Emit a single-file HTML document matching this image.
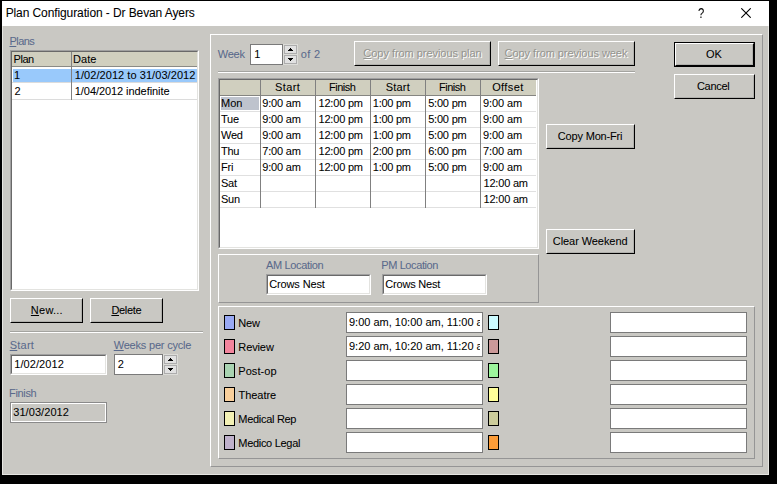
<!DOCTYPE html>
<html><head><meta charset="utf-8"><title>Plan Configuration</title><style>
*{margin:0;padding:0;box-sizing:border-box}
html,body{width:777px;height:484px;overflow:hidden;background:#000}
body{position:relative;font-family:"Liberation Sans",sans-serif;font-size:11px;color:#000;line-height:13px;-webkit-text-stroke:0.06px currentColor}
.a{position:absolute;white-space:nowrap}
.win{left:2px;top:1px;width:767px;height:474px;background:#c9c8c3}
.title{left:2px;top:1px;width:767px;height:25px;background:#fff}
.lbl{color:#5a6a8c}
.t{height:13px;line-height:13px}
u{text-decoration:underline;text-underline-offset:1px}
.btn{background:#c9c8c3;border:1px solid;border-color:#fff #000 #000 #fff;text-align:center}
.btn i{position:absolute;left:0;top:0;right:0;bottom:0;border:1px solid;border-color:#c9c8c3 #b0b0ac #b0b0ac #c9c8c3;}
.btn span{position:absolute;left:0;right:0;text-align:center;height:13px;line-height:13px}
.btn span b{font-weight:normal;position:relative}
.dis span{color:#94948f;text-shadow:1px 1px 0 #fff;-webkit-text-stroke:0}
.sunk{border:1px solid;border-color:#a0a0a0 #fff #fff #a0a0a0;background:#fff}
.sunk>i{position:absolute;left:0;top:0;right:0;bottom:0;border:1px solid;border-color:#696969 #e3e3e0 #e3e3e0 #696969;pointer-events:none}
.inp{border:1px solid #7a7a7a;background:#fff}
.raised{border:1px solid;border-color:#fff #959595 #959595 #fff}
.sep{height:2px;border-top:1px solid #a4a4a0;border-bottom:1px solid #fff}
.hdr{background:#d0cfbf}
.spbg{background:#dcdcd8}
.spin{background:#e1e1e1;border:1px solid #adadad;width:13px;height:9px}
.sw{border:1px solid #000;width:11px;height:15px}
</style></head><body>
<div class="a win"></div>
<div class="a title"></div>
<div class="a" style="left:2px;top:26px;width:1px;height:449px;background:#e6e6e2"></div>
<div class="a" style="left:768px;top:26px;width:1px;height:449px;background:#e6e6e2"></div>
<div class="a" style="left:2px;top:474px;width:767px;height:1px;background:#e6e6e2"></div>
<div class="a" id="ttl" style="left:5.63px;top:6px;font-size:12px;height:14px;line-height:14px;letter-spacing:-0.098px;">Plan Configuration - Dr Bevan Ayers</div>
<div class="a" id="q" style="left:697px;top:5px;width:8px;text-align:center;font-size:15px;height:16px;line-height:16px;transform:scaleX(0.75)">?</div>
<svg class="a" style="left:741px;top:8px" width="10" height="10"><path d="M0.3 0.3L9.7 9.7M9.7 0.3L0.3 9.7" stroke="#000" stroke-width="1.1" fill="none"/></svg>
<div class="a t lbl" id="plans" style="left:9.5px;top:35px;letter-spacing:-0.550px;"><u>P</u>lans</div>
<div class="a sunk" style="left:10px;top:50px;width:189px;height:241px"><i></i></div>
<div class="a hdr" style="left:12px;top:52px;width:185px;height:14px"></div>
<div class="a" style="left:12px;top:66px;width:185px;height:1px;background:#8a8a86"></div>
<div class="a" style="left:13px;top:69px;width:184px;height:13px;background:#99c9fb"></div>
<div class="a" style="left:12px;top:82px;width:185px;height:1px;background:#dcdcdc"></div>
<div class="a" style="left:12px;top:99px;width:185px;height:1px;background:#dcdcdc"></div>
<div class="a" style="left:71px;top:52px;width:1px;height:48px;background:#808080"></div>
<div class="a t " id="h_plan" style="left:13.5px;top:53px;letter-spacing:-0.450px;">Plan</div>
<div class="a t " id="h_date" style="left:73.1px;top:53px;">Date</div>
<div class="a t " id="r1a" style="left:14.1px;top:69px;">1</div>
<div class="a t " id="r1b" style="left:74.81px;top:69px;letter-spacing:0.058px;">1/02/2012 to 31/03/2012</div>
<div class="a t " style="left:14.4px;top:85px;">2</div>
<div class="a t " id="r2b" style="left:74.81px;top:85px;letter-spacing:-0.067px;">1/04/2012 indefinite</div>
<div class="a btn " style="left:10px;top:298px;width:73px;height:25px"><i></i><span style="top:5px;"><b id="b_new" style="left:0.36px;letter-spacing:0.234px;"><u>N</u>ew...</b></span></div>
<div class="a btn " style="left:90px;top:298px;width:73px;height:25px"><i></i><span style="top:5px;"><b id="b_del" style="left:-0.18px;letter-spacing:-0.324px;"><u>D</u>elete</b></span></div>
<div class="a sep" style="left:10px;top:331px;width:193px"></div>
<div class="a t lbl" id="start" style="left:9.73px;top:339px;letter-spacing:0.225px;"><u>S</u>tart</div>
<div class="a t lbl" id="wpc" style="left:113.73px;top:339px;letter-spacing:-0.200px;"><u>W</u>eeks per cycle</div>
<div class="a sunk" style="left:10px;top:354px;width:97px;height:21px"><i></i></div>
<div class="a t " id="v_start" style="left:14.19px;top:358px;letter-spacing:0.079px;">1/02/2012</div>
<div class="a inp" style="left:114px;top:354px;width:49px;height:21px"></div>
<div class="a t " id="v_wpc" style="left:117.82px;top:358px;">2</div>
<div class="a spbg" style="left:163px;top:354px;width:15px;height:21px"></div>
<div class="a spin" style="left:164px;top:355px"></div>
<div class="a spin" style="left:164px;top:365px"></div>
<svg class="a" style="left:168px;top:358px" width="5" height="3"><path d="M2 0h1v1h1v1h1v1h-5v-1h1v-1h1z" fill="#000"/></svg>
<svg class="a" style="left:168px;top:368px" width="5" height="3"><path d="M0 0h5v1h-1v1h-1v1h-1v-1h-1v-1h-1z" fill="#000"/></svg>
<div class="a t lbl" id="finish" style="left:9.1px;top:387px;letter-spacing:-0.360px;">Finish</div>
<div class="a" style="left:10px;top:402px;width:97px;height:21px;border:1px solid #8a8a8a"><div class="a" style="left:0;top:0;right:0;bottom:0;border:1px solid #fff"></div></div>
<div class="a t " id="v_fin" style="left:13.28px;top:406px;letter-spacing:0.060px;">31/03/2012</div>
<div class="a raised" style="left:210px;top:34px;width:553px;height:433px"></div>
<div class="a t lbl" id="week" style="left:217.73px;top:48px;letter-spacing:-0.210px;">Week</div>
<div class="a inp" style="left:250px;top:44px;width:33px;height:21px"></div>
<div class="a t " id="v_week" style="left:254.18px;top:48px;">1</div>
<div class="a spbg" style="left:283px;top:44px;width:15px;height:21px"></div>
<div class="a spin" style="left:284px;top:45px"></div>
<div class="a spin" style="left:284px;top:55px"></div>
<svg class="a" style="left:288px;top:48px" width="5" height="3"><path d="M2 0h1v1h1v1h1v1h-5v-1h1v-1h1z" fill="#000"/></svg>
<svg class="a" style="left:288px;top:58px" width="5" height="3"><path d="M0 0h5v1h-1v1h-1v1h-1v-1h-1v-1h-1z" fill="#000"/></svg>
<div class="a t lbl" id="of2" style="left:300.73px;top:48px;letter-spacing:0.390px;">of 2</div>
<div class="a btn dis" style="left:354px;top:41px;width:137px;height:25px"><i></i><span style="top:5px;"><b id="b_cpp" style="left:0px;letter-spacing:-0.041px;"><u>C</u>opy from previous plan</b></span></div>
<div class="a btn dis" style="left:498px;top:41px;width:137px;height:25px"><i></i><span style="top:5px;"><b id="b_cpw" style="left:-0.54px;letter-spacing:-0.058px;"><u>C</u>opy from previous week</b></span></div>
<div class="a sep" style="left:218px;top:71px;width:417px"></div>
<div class="a sunk" style="left:218px;top:78px;width:321px;height:171px"><i></i></div>
<div class="a hdr" style="left:220px;top:80px;width:316px;height:15px"></div>
<div class="a" style="left:220px;top:95px;width:316px;height:1px;background:#858581"></div>
<div class="a" style="left:220px;top:111px;width:316px;height:1px;background:#e0e0e0"></div>
<div class="a" style="left:220px;top:127px;width:316px;height:1px;background:#e0e0e0"></div>
<div class="a" style="left:220px;top:143px;width:316px;height:1px;background:#e0e0e0"></div>
<div class="a" style="left:220px;top:159px;width:316px;height:1px;background:#e0e0e0"></div>
<div class="a" style="left:220px;top:175px;width:316px;height:1px;background:#e0e0e0"></div>
<div class="a" style="left:220px;top:191px;width:316px;height:1px;background:#e0e0e0"></div>
<div class="a" style="left:220px;top:207px;width:316px;height:1px;background:#e0e0e0"></div>
<div class="a" style="left:260px;top:80px;width:1px;height:128px;background:#808080"></div>
<div class="a" style="left:315px;top:80px;width:1px;height:128px;background:#808080"></div>
<div class="a" style="left:370px;top:80px;width:1px;height:128px;background:#808080"></div>
<div class="a" style="left:425px;top:80px;width:1px;height:128px;background:#808080"></div>
<div class="a" style="left:480px;top:80px;width:1px;height:128px;background:#808080"></div>
<div class="a" style="left:221px;top:97px;width:38px;height:13px;background:#bec3cd"></div>
<div class="a t" style="left:261px;top:81px;width:54px;text-align:center"><b id="th0" style="font-weight:normal;position:relative;left:-0.45px;letter-spacing:0.400px;">Start</b></div>
<div class="a t" style="left:316px;top:81px;width:54px;text-align:center"><b id="th1" style="font-weight:normal;position:relative;left:-0.81px;letter-spacing:-0.468px;">Finish</b></div>
<div class="a t" style="left:371px;top:81px;width:54px;text-align:center"><b id="th2" style="font-weight:normal;position:relative;left:-0.18px;letter-spacing:0.201px;">Start</b></div>
<div class="a t" style="left:426px;top:81px;width:54px;text-align:center"><b id="th3" style="font-weight:normal;position:relative;left:-0.81px;letter-spacing:-0.468px;">Finish</b></div>
<div class="a t" style="left:481px;top:81px;width:54px;text-align:center"><b id="th4" style="font-weight:normal;position:relative;left:-0.09px;letter-spacing:0.400px;">Offset</b></div>
<div class="a t " id="mon" style="left:221px;top:97px;">Mon</div>
<div class="a t " id="c0" style="left:262.19px;top:97px;letter-spacing:-0.165px;">9:00 am</div>
<div class="a t " id="c1" style="left:318.54px;top:97px;letter-spacing:-0.200px;">12:00 pm</div>
<div class="a t " id="c2" style="left:372.82px;top:97px;letter-spacing:-0.255px;">1:00 pm</div>
<div class="a t " id="c3" style="left:428.18px;top:97px;letter-spacing:-0.200px;">5:00 pm</div>
<div class="a t " id="c4" style="left:482.9px;top:97px;letter-spacing:-0.075px;">9:00 am</div>
<div class="a t " style="left:221px;top:113px;letter-spacing:-0.25px;">Tue</div>
<div class="a t " style="left:262.19px;top:113px;letter-spacing:-0.165px;">9:00 am</div>
<div class="a t " style="left:318.54px;top:113px;letter-spacing:-0.200px;">12:00 pm</div>
<div class="a t " style="left:372.82px;top:113px;letter-spacing:-0.255px;">1:00 pm</div>
<div class="a t " style="left:428.18px;top:113px;letter-spacing:-0.200px;">5:00 pm</div>
<div class="a t " style="left:482.9px;top:113px;letter-spacing:-0.075px;">9:00 am</div>
<div class="a t " style="left:221px;top:129px;letter-spacing:-0.25px;">Wed</div>
<div class="a t " style="left:262.19px;top:129px;letter-spacing:-0.165px;">9:00 am</div>
<div class="a t " style="left:318.54px;top:129px;letter-spacing:-0.200px;">12:00 pm</div>
<div class="a t " style="left:372.82px;top:129px;letter-spacing:-0.255px;">1:00 pm</div>
<div class="a t " style="left:428.18px;top:129px;letter-spacing:-0.200px;">5:00 pm</div>
<div class="a t " style="left:482.9px;top:129px;letter-spacing:-0.075px;">9:00 am</div>
<div class="a t " style="left:221px;top:145px;letter-spacing:-0.25px;">Thu</div>
<div class="a t " style="left:262.19px;top:145px;letter-spacing:-0.165px;">7:00 am</div>
<div class="a t " style="left:318.54px;top:145px;letter-spacing:-0.200px;">12:00 pm</div>
<div class="a t " style="left:372.82px;top:145px;letter-spacing:-0.255px;">2:00 pm</div>
<div class="a t " style="left:428.18px;top:145px;letter-spacing:-0.200px;">6:00 pm</div>
<div class="a t " style="left:482.9px;top:145px;letter-spacing:-0.075px;">7:00 am</div>
<div class="a t " style="left:221px;top:161px;letter-spacing:-0.25px;">Fri</div>
<div class="a t " style="left:262.19px;top:161px;letter-spacing:-0.165px;">9:00 am</div>
<div class="a t " style="left:318.54px;top:161px;letter-spacing:-0.200px;">12:00 pm</div>
<div class="a t " style="left:372.82px;top:161px;letter-spacing:-0.255px;">1:00 pm</div>
<div class="a t " style="left:428.18px;top:161px;letter-spacing:-0.200px;">5:00 pm</div>
<div class="a t " style="left:482.9px;top:161px;letter-spacing:-0.075px;">9:00 am</div>
<div class="a t " style="left:221px;top:177px;letter-spacing:-0.25px;">Sat</div>
<div class="a t " style="left:483.54px;top:177px;letter-spacing:-0.200px;">12:00 am</div>
<div class="a t " style="left:221px;top:193px;letter-spacing:-0.25px;">Sun</div>
<div class="a t " style="left:483.54px;top:193px;letter-spacing:-0.200px;">12:00 am</div>
<div class="a btn " style="left:546px;top:124px;width:89px;height:25px"><i></i><span style="top:5px;"><b id="b_cmf" style="left:-0.45px;letter-spacing:-0.164px;">Copy Mon-Fri</b></span></div>
<div class="a btn " style="left:546px;top:229px;width:89px;height:25px"><i></i><span style="top:5px;"><b id="b_cw" style="left:-0.36px;letter-spacing:-0.069px;">Clear Weekend</b></span></div>
<div class="a" style="left:674px;top:42px;width:81px;height:25px;border:1px solid #000"></div>
<div class="a btn " style="left:675px;top:43px;width:79px;height:23px"><i></i><span style="top:4px;"><b id="ok" style="left:-0.6px;">OK</b></span></div>
<div class="a btn " style="left:674px;top:74px;width:81px;height:25px"><i></i><span style="top:5px;"><b id="cancel" style="left:-1.35px;letter-spacing:-0.306px;">Cancel</b></span></div>
<div class="a raised" style="left:218px;top:254px;width:321px;height:49px"></div>
<div class="a t lbl" id="aml" style="left:266px;top:259px;letter-spacing:-0.342px;">AM Location</div>
<div class="a t lbl" id="pml" style="left:381.32px;top:259px;letter-spacing:-0.405px;">PM Location</div>
<div class="a sunk" style="left:266px;top:274px;width:105px;height:21px"><i></i></div>
<div class="a sunk" style="left:382px;top:274px;width:105px;height:21px"><i></i></div>
<div class="a t " id="v_am" style="left:269.19px;top:278px;letter-spacing:-0.130px;">Crows Nest</div>
<div class="a t " id="v_pm" style="left:385.31px;top:278px;letter-spacing:-0.200px;">Crows Nest</div>
<div class="a raised" style="left:218px;top:306px;width:537px;height:153px"></div>
<div class="a sw" style="left:224px;top:315px;background:#99a9f3"></div>
<div class="a t " id="n0" style="left:238.3px;top:317px;letter-spacing:-0.135px;">New</div>
<div class="a inp" style="left:346px;top:312px;width:137px;height:21px"><div class="a" style="left:0;top:0;width:133px;height:19px;overflow:hidden"><div class="a t" id="iv" style="left:2px;top:3px;">9:00 am, 10:00 am, 11:00 a</div></div></div>
<div class="a sw" style="left:488px;top:315px;background:#ccfbff"></div>
<div class="a inp" style="left:610px;top:312px;width:137px;height:21px"></div>
<div class="a sw" style="left:224px;top:339px;background:#f3859d"></div>
<div class="a t " id="n1" style="left:238.3px;top:341px;letter-spacing:-0.108px;">Review</div>
<div class="a inp" style="left:346px;top:336px;width:137px;height:21px"><div class="a" style="left:0;top:0;width:133px;height:19px;overflow:hidden"><div class="a t" style="left:2px;top:3px;">9:20 am, 10:20 am, 11:20 a</div></div></div>
<div class="a sw" style="left:488px;top:339px;background:#cb9999"></div>
<div class="a inp" style="left:610px;top:336px;width:137px;height:21px"></div>
<div class="a sw" style="left:224px;top:363px;background:#a9d3b1"></div>
<div class="a t " id="n2" style="left:238.3px;top:365px;letter-spacing:0.060px;">Post-op</div>
<div class="a inp" style="left:346px;top:360px;width:137px;height:21px"><div class="a" style="left:0;top:0;width:133px;height:19px;overflow:hidden"><div class="a t" style="left:2px;top:3px;"></div></div></div>
<div class="a sw" style="left:488px;top:363px;background:#9df59d"></div>
<div class="a inp" style="left:610px;top:360px;width:137px;height:21px"></div>
<div class="a sw" style="left:224px;top:387px;background:#f9cf9b"></div>
<div class="a t " id="n3" style="left:238.6px;top:389px;letter-spacing:-0.060px;">Theatre</div>
<div class="a inp" style="left:346px;top:384px;width:137px;height:21px"><div class="a" style="left:0;top:0;width:133px;height:19px;overflow:hidden"><div class="a t" style="left:2px;top:3px;"></div></div></div>
<div class="a sw" style="left:488px;top:387px;background:#ffff99"></div>
<div class="a inp" style="left:610px;top:384px;width:137px;height:21px"></div>
<div class="a sw" style="left:224px;top:411px;background:#f3f1b5"></div>
<div class="a t " id="n4" style="left:238.3px;top:413px;letter-spacing:-0.297px;">Medical Rep</div>
<div class="a inp" style="left:346px;top:408px;width:137px;height:21px"><div class="a" style="left:0;top:0;width:133px;height:19px;overflow:hidden"><div class="a t" style="left:2px;top:3px;"></div></div></div>
<div class="a sw" style="left:488px;top:411px;background:#cccc9b"></div>
<div class="a inp" style="left:610px;top:408px;width:137px;height:21px"></div>
<div class="a sw" style="left:224px;top:435px;background:#bfb1cb"></div>
<div class="a t " id="n5" style="left:238.3px;top:437px;letter-spacing:-0.303px;">Medico Legal</div>
<div class="a inp" style="left:346px;top:432px;width:137px;height:21px"><div class="a" style="left:0;top:0;width:133px;height:19px;overflow:hidden"><div class="a t" style="left:2px;top:3px;"></div></div></div>
<div class="a sw" style="left:488px;top:435px;background:#fb9c38"></div>
<div class="a inp" style="left:610px;top:432px;width:137px;height:21px"></div>
</body></html>
